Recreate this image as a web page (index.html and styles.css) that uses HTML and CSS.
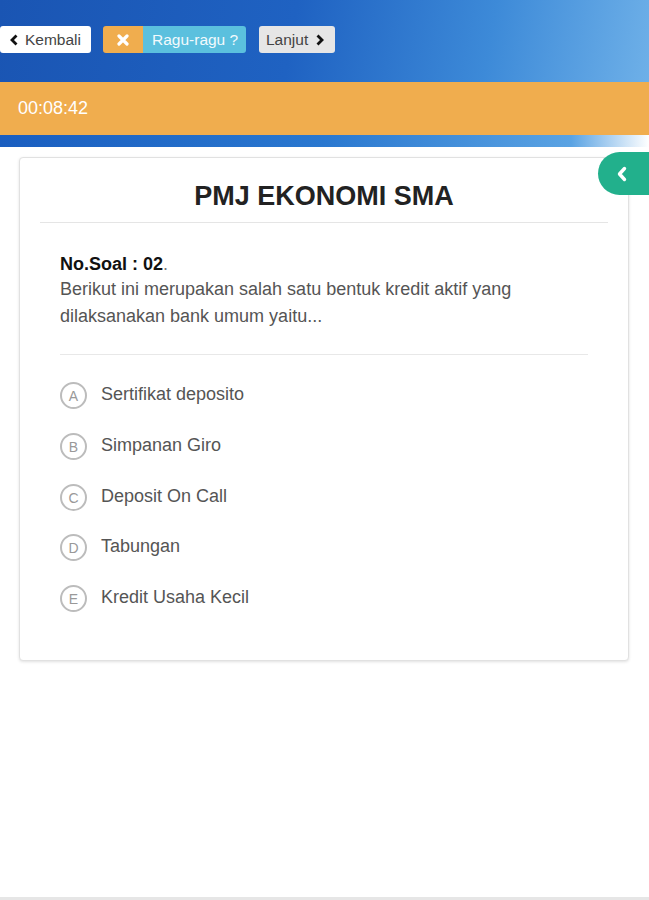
FILE: index.html
```html
<!DOCTYPE html>
<html lang="id">
<head>
<meta charset="utf-8">
<title>PMJ Ekonomi SMA</title>
<link rel="stylesheet" href="styles.css">
</head>
<body>
<div class="page">
  <header class="topbar">
    <div class="nav">
      <button class="btn btn-back">
        <svg class="chev" viewBox="0 0 10 12" width="10" height="12"><path d="M7.5 1.5 L3 6 L7.5 10.5" fill="none" stroke="#111" stroke-width="2.8"/></svg>
        <span>Kembali</span>
      </button>
      <div class="btn-group">
        <span class="ragu-x">
          <svg viewBox="0 0 12 12" width="12" height="12"><path d="M2 2 L10 10 M10 2 L2 10" stroke="#fff" stroke-width="3.2" stroke-linecap="round"/></svg>
        </span>
        <span class="ragu-label">Ragu-ragu ?</span>
      </div>
      <button class="btn btn-next">
        <span>Lanjut</span>
        <svg class="chev" viewBox="0 0 10 12" width="10" height="12"><path d="M2.5 1.5 L7 6 L2.5 10.5" fill="none" stroke="#111" stroke-width="2.8"/></svg>
      </button>
    </div>
  </header>
  <div class="timer">00:08:42</div>
  <div class="stripe"></div>

  <main class="content">
    <div class="card">
      <h1 class="title">PMJ EKONOMI SMA</h1>
      <div class="question">
        <p class="qno"><b>No.Soal : 02</b>.</p>
        <p class="qtext">Berikut ini merupakan salah satu bentuk kredit aktif yang dilaksanakan bank umum yaitu...</p>
      </div>
      <ul class="options">
        <li><span class="opt">A</span><span class="opt-text">Sertifikat deposito</span></li>
        <li><span class="opt">B</span><span class="opt-text">Simpanan Giro</span></li>
        <li><span class="opt">C</span><span class="opt-text">Deposit On Call</span></li>
        <li><span class="opt">D</span><span class="opt-text">Tabungan</span></li>
        <li><span class="opt">E</span><span class="opt-text">Kredit Usaha Kecil</span></li>
      </ul>
    </div>
    <button class="side-tab" aria-label="Daftar soal">
      <svg viewBox="0 0 12 16" width="12" height="16"><path d="M8.5 2.5 L3.5 8 L8.5 13.5" fill="none" stroke="#fff" stroke-width="3.4" stroke-linecap="round" stroke-linejoin="round"/></svg>
    </button>
  </main>
  <footer class="bottom"></footer>
</div>
</body>
</html>
```

FILE: styles.css
```css
* { box-sizing: border-box; }
html, body { margin: 0; padding: 0; }
body {
  font-family: "Liberation Sans", Arial, sans-serif;
  background: #fff;
  color: #555;
}
.page {
  width: 649px;
  height: 900px;
  display: flex;
  flex-direction: column;
  overflow: hidden;
}
.topbar {
  height: 82px;
  background: linear-gradient(100deg, #1a55b3 0%, #1f62c2 45%, #3d8ad8 75%, #6eb0e8 100%);
  display: flex;
  align-items: flex-start;
}
.nav {
  margin-top: 26px;
  display: flex;
  gap: 12px;
  align-items: center;
}
.btn {
  height: 27px;
  border: none;
  border-radius: 3px;
  font-family: "Liberation Sans", Arial, sans-serif;
  font-size: 15.5px;
  display: flex;
  align-items: center;
  gap: 6px;
  padding: 0 8px;
  cursor: pointer;
}
.btn-back {
  width: 91px;
  background: #fff;
  color: #444;
  padding-left: 9px;
  gap: 6px;
}
.btn-group {
  display: flex;
  height: 27px;
  border-radius: 3px;
  overflow: hidden;
}
.ragu-x {
  width: 40px;
  background: #f0ad4e;
  display: flex;
  align-items: center;
  justify-content: center;
}
.ragu-label {
  width: 103px;
  background: #5bc0de;
  color: #f2fafd;
  font-size: 15.5px;
  display: flex;
  align-items: center;
  padding-left: 9px;
}
.btn-next {
  width: 76px;
  background: #e6e6e6;
  color: #444;
  margin-left: 1px;
  padding-left: 7px;
  gap: 7px;
}
.timer {
  height: 53px;
  background: #f0ad4e;
  color: #fff;
  font-size: 18px;
  display: flex;
  align-items: center;
  padding-left: 18px;
}
.stripe {
  height: 12px;
  background: linear-gradient(90deg, #1a5ec0 0%, #2a78d0 50%, #5aa3e3 88%, #ffffff 100%);
}
.content {
  flex: 1;
  position: relative;
  padding: 10px 20px 0 19px;
}
.card {
  width: 610px;
  height: 504px;
  background: #fff;
  border: 1px solid #e1e1e1;
  border-radius: 4px;
  box-shadow: 0 1px 3px rgba(0,0,0,0.12);
  padding: 0 20px;
}
.title {
  margin: 0;
  height: 65px;
  padding-top: 23px;
  text-align: center;
  font-size: 27px;
  line-height: 30px;
  font-weight: bold;
  color: #222;
  border-bottom: 1px solid #e5e5e5;
}
.question {
  margin: 0 20px;
  padding-top: 31px;
  padding-bottom: 24px;
  border-bottom: 1px solid #e8e8e8;
}
.question p { margin: 0; }
.qno {
  font-size: 18px;
  line-height: 21px;
  color: #777;
}
.qno b { color: #111; }
.qtext {
  font-size: 18px;
  line-height: 27px;
  color: #555;
  margin-top: 1px !important;
}
.options {
  list-style: none;
  margin: 0 20px;
  padding: 27px 0 0;
  display: flex;
  flex-direction: column;
  gap: 23.75px;
}
.options li {
  display: flex;
  align-items: center;
  gap: 14px;
  height: 27px;
}
.opt {
  width: 27px;
  height: 27px;
  flex: none;
  border: 2px solid #bcbcbc;
  border-radius: 50%;
  display: flex;
  align-items: center;
  justify-content: center;
  font-size: 14px;
  color: #999;
  padding-top: 1px;
}
.opt-text {
  font-size: 18px;
  color: #555;
  margin-top: -2px;
}
.side-tab {
  position: absolute;
  right: -20px;
  top: 5px;
  width: 71px;
  height: 43px;
  background: #22b08c;
  border: none;
  border-radius: 22px;
  display: flex;
  align-items: center;
  padding-left: 18px;
  cursor: pointer;
}
.bottom {
  height: 3px;
  background: #e6e6e6;
}
```
